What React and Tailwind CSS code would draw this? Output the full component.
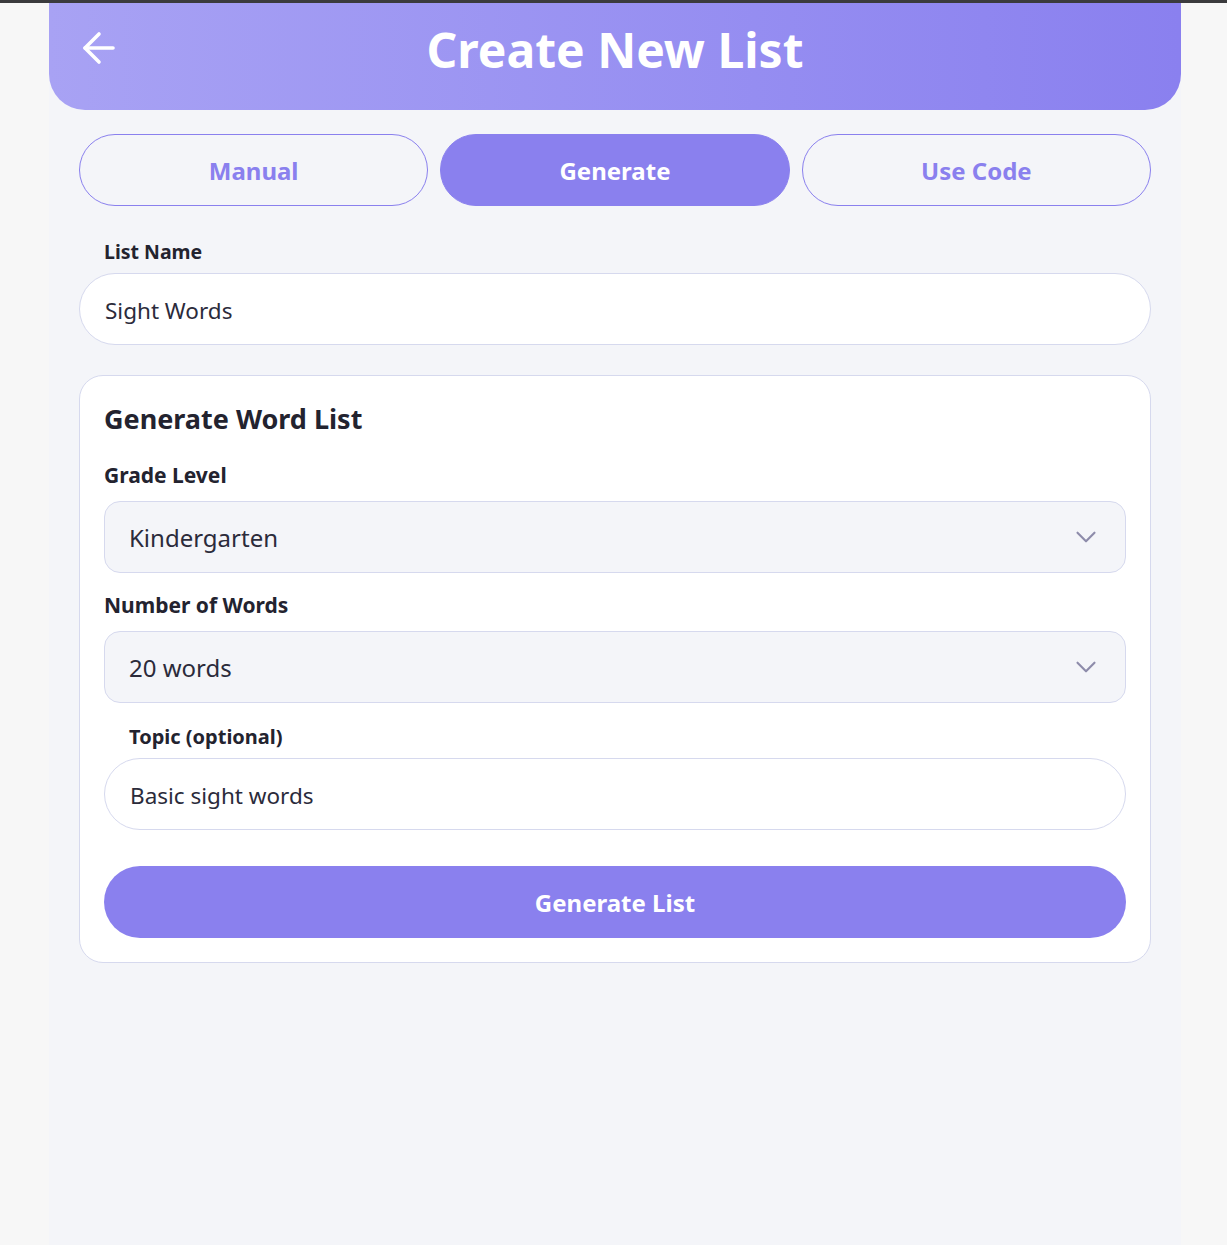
import { ArrowLeft, ChevronDown } from 'lucide-react'

const tabs = ['Manual', 'Generate', 'Use Code']

function Label({ children, className = '' }) {
  return <p className={`font-bold leading-[28px] text-[#23232f] ${className}`}>{children}</p>
}

function Select({ value }) {
  return (
    <div className="flex h-[72px] items-center justify-between rounded-2xl border border-[#d6d9ee] bg-[#f4f5f9] pl-6 pr-[22px]">
      <span className="pt-px text-[24px] text-[#2b2b3b]">{value}</span>
      <ChevronDown size={34} strokeWidth={1.5} className="text-[#8e8cab]" />
    </div>
  )
}

export default function App() {
  return (
    <div className="min-h-screen border-t-[3px] border-[#3b3b3d] bg-[#f7f7f7] font-['Noto_Sans',sans-serif]">
      <div className="ml-[49px] min-h-[1242px] w-[1132px] bg-[#f4f5f9]">
        <header className="relative flex h-[107px] justify-center rounded-b-[36px] bg-gradient-to-r from-[#a8a2f4] to-[#8a80ef] pt-[23px]">
          <button className="absolute left-[26px] top-[21px] text-white">
            <ArrowLeft size={48} strokeWidth={1.8} />
          </button>
          <h1 className="text-[48px] font-bold leading-none text-white">Create New List</h1>
        </header>

        <main className="px-[30px]">
          <div className="mt-6 grid grid-cols-3 gap-3">
            {tabs.map(tab => (
              <button
                key={tab}
                className={`h-[72px] rounded-full border pt-px text-[24px] font-bold ${tab === 'Generate' ? 'border-[#8a80ee] bg-[#8a80ee] text-white' : 'border-[#8a80ee] bg-transparent text-[#8a80ee]'}`}
              >
                {tab}
              </button>
            ))}
          </div>

          <Label className="mt-8 mb-[7px] pl-[25px] text-[19.5px]">List Name</Label>
          <div className="flex h-[72px] items-center rounded-full border border-[#d6d9ee] bg-white px-[25px] pt-[3px] text-[22.5px] text-[#2b2b3b]">Sight Words</div>

          <section className="mt-[30px] rounded-3xl border border-[#d6d9ee] bg-white px-6 pt-6 pb-6">
            <h2 className="text-[27px] font-bold leading-[38px] text-[#23232f]">Generate Word List</h2>
            <Label className="mt-[23px] mb-3 text-[21px]">Grade Level</Label>
            <Select value="Kindergarten" />
            <Label className="mt-[18px] mb-3 text-[21px]">Number of Words</Label>
            <Select value="20 words" />
            <Label className="mt-5 mb-[7px] pl-[25px] text-[20px]">Topic (optional)</Label>
            <div className="flex h-[72px] items-center rounded-full border border-[#d6d9ee] bg-white px-[25px] pt-[3px] text-[22.5px] text-[#2b2b3b]">Basic sight words</div>
            <button className="mt-9 h-[72px] w-full rounded-full bg-[#8a80ee] pt-px text-[24px] font-bold text-white">Generate List</button>
          </section>
        </main>
      </div>
    </div>
  )
}
